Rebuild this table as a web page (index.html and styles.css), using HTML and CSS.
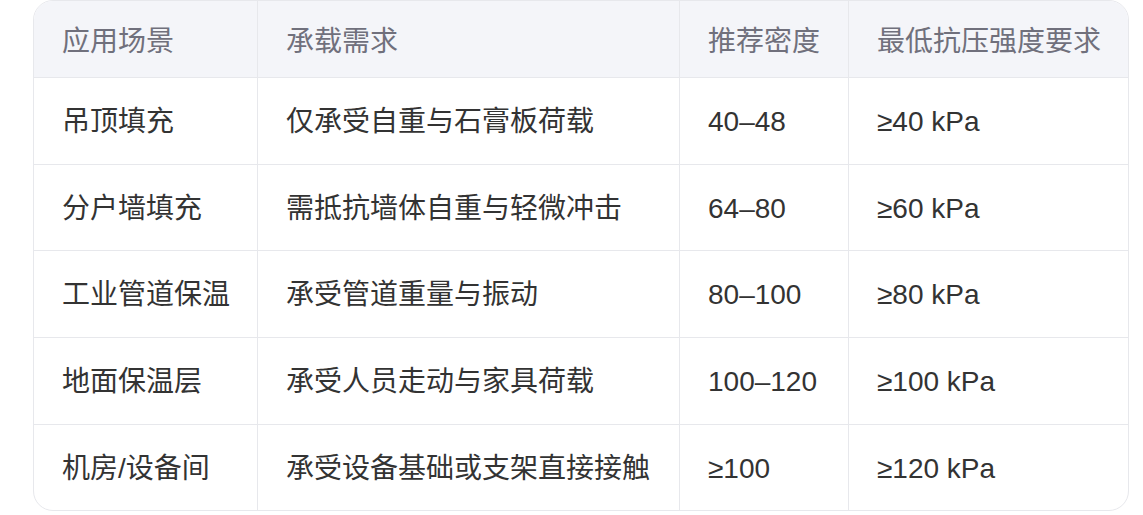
FILE: index.html
```html
<!DOCTYPE html>
<html lang="zh-CN">
<head>
<meta charset="utf-8">
<title>应用场景</title>
<link rel="stylesheet" href="styles.css">
</head>
<body>
<div class="table-wrap">
  <table class="spec-table">
    <colgroup>
      <col class="c1"><col class="c2"><col class="c3"><col class="c4">
    </colgroup>
    <thead>
      <tr>
        <th>应用场景</th>
        <th>承载需求</th>
        <th>推荐密度</th>
        <th>最低抗压强度要求</th>
      </tr>
    </thead>
    <tbody>
      <tr><td>吊顶填充</td><td>仅承受自重与石膏板荷载</td><td>40–48</td><td>≥40 kPa</td></tr>
      <tr><td>分户墙填充</td><td>需抵抗墙体自重与轻微冲击</td><td>64–80</td><td>≥60 kPa</td></tr>
      <tr><td>工业管道保温</td><td>承受管道重量与振动</td><td>80–100</td><td>≥80 kPa</td></tr>
      <tr><td>地面保温层</td><td>承受人员走动与家具荷载</td><td>100–120</td><td>≥100 kPa</td></tr>
      <tr><td>机房/设备间</td><td>承受设备基础或支架直接接触</td><td>≥100</td><td>≥120 kPa</td></tr>
    </tbody>
  </table>
</div>
</body>
</html>
```

FILE: styles.css
```css
html, body {
  margin: 0;
  padding: 0;
  background: #ffffff;
}

body {
  padding-left: 33px;
  font-family: "Liberation Sans", "Noto Sans CJK SC", sans-serif;
  font-size: 28px;
  color: #333333;
}

.table-wrap {
  width: 1096px;
  box-sizing: border-box;
  border: 1px solid #e7e8ec;
  border-radius: 20px;
  overflow: hidden;
  background: #ffffff;
}

.spec-table {
  width: 1094px;
  table-layout: fixed;
  border-collapse: separate;
  border-spacing: 0;
}

.c1 { width: 224px; }
.c2 { width: 422px; }
.c3 { width: 169px; }
.c4 { width: 279px; }

.spec-table th,
.spec-table td {
  text-align: left;
  vertical-align: middle;
  padding: 2px 0 0 28px;
  border-right: 1px solid #e7e8ec;
  border-bottom: 1px solid #e7e8ec;
  white-space: nowrap;
  line-height: 36px;
}

.spec-table th:last-child,
.spec-table td:last-child {
  border-right: none;
}

.spec-table thead th {
  height: 77px;
  box-sizing: border-box;
  padding-top: 5px;
  background: #f4f5f9;
  color: #70707c;
  font-weight: normal;
}

.spec-table tbody td {
  height: 86.7px;
  box-sizing: border-box;
}

.spec-table tbody tr:last-child td {
  border-bottom: none;
  height: 85.7px;
}
```
